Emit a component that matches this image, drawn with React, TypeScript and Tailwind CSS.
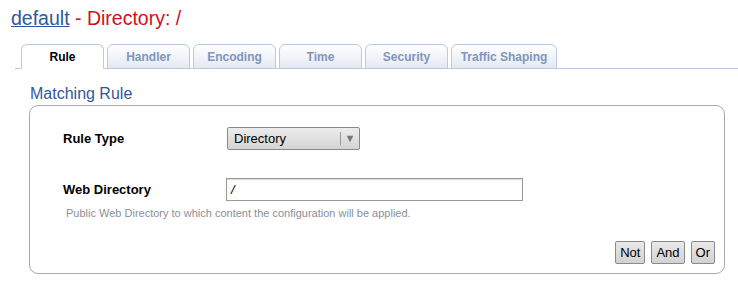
const tabs = ['Rule', 'Handler', 'Encoding', 'Time', 'Security', 'Traffic Shaping'];

function Tab({ label, active }: { label: string; active: boolean }) {
  return (
    <div
      className={
        'h-[25px] -mb-px flex items-center justify-center rounded-t-[6px] border border-[#b9c9e2] text-[12px] font-bold ' +
        (label === 'Traffic Shaping' ? 'w-[106px] ' : 'w-[83px] ') +
        (active
          ? 'bg-white border-b-white text-black'
          : 'bg-gradient-to-b from-white to-[#e3e9f3] text-[#7f96bd]')
      }
    >
      {label}
    </div>
  );
}

function Btn({ children }: { children: string }) {
  return (
    <button className="h-[23px] px-[4px] rounded-[2px] border border-[#8a8a8a] bg-gradient-to-b from-[#e8e8e8] to-[#d2d2d2] text-[13px] text-black leading-none">
      {children}
    </button>
  );
}

export default function App() {
  return (
    <div className="w-[738px] h-[282px] bg-white font-['Liberation_Sans',Arial,sans-serif] overflow-hidden">
      <h1 className="pl-[11px] pt-[6px] text-[19.5px] leading-[24px]">
        <span className="text-[#2a5aa0] underline">default</span>
        <span className="text-[#d0101c]"> - Directory: /</span>
      </h1>

      {/* tab strip */}
      <div className="mt-[14px] ml-[15px] flex gap-[3px] pl-[6px] border-b border-[#b9c9e2]">
        {tabs.map((t) => (
          <Tab key={t} label={t} active={t === 'Rule'} />
        ))}
      </div>

      <div className="pl-[30px] pt-[15px] text-[16px] leading-[20px] text-[#33589a]">Matching Rule</div>

      <div className="ml-[29px] mt-[1px] w-[696px] h-[169px] rounded-[9px] border border-[#a9a9a9] flex flex-col">
        <div className="flex items-center pt-[21px]">
          <div className="w-[197px] pl-[33px] text-[13px] font-bold">Rule Type</div>
          <div className="w-[133px] h-[23px] flex items-center rounded-[2px] border border-[#8a8a8a] bg-gradient-to-b from-[#ececec] to-[#d4d4d4] text-[13px]">
            <span className="flex-1 pl-[6px]">Directory</span>
            <span className="h-[13px] border-l border-[#9a9a9a]" />
            <span className="w-[18px] flex justify-center text-[#777] text-[11px]">▼</span>
          </div>
        </div>

        <div className="flex items-center pt-[28px]">
          <div className="w-[196px] pl-[33px] text-[13px] font-bold">Web Directory</div>
          <div className="w-[297px] h-[23px] flex items-center border border-[#9a9a9a] shadow-[inset_0_1px_1px_rgba(0,0,0,0.15)] text-[13px] pl-[4px] italic">
            /
          </div>
        </div>

        <div className="pl-[36px] pt-[5px] text-[11px] leading-[14px] text-[#8a8f99]">
          Public Web Directory to which content the configuration will be applied.
        </div>

        <div className="flex justify-end gap-[6px] pr-[9px] mt-[21px]">
          <Btn>Not</Btn>
          <Btn>And</Btn>
          <Btn>Or</Btn>
        </div>
      </div>
    </div>
  );
}
